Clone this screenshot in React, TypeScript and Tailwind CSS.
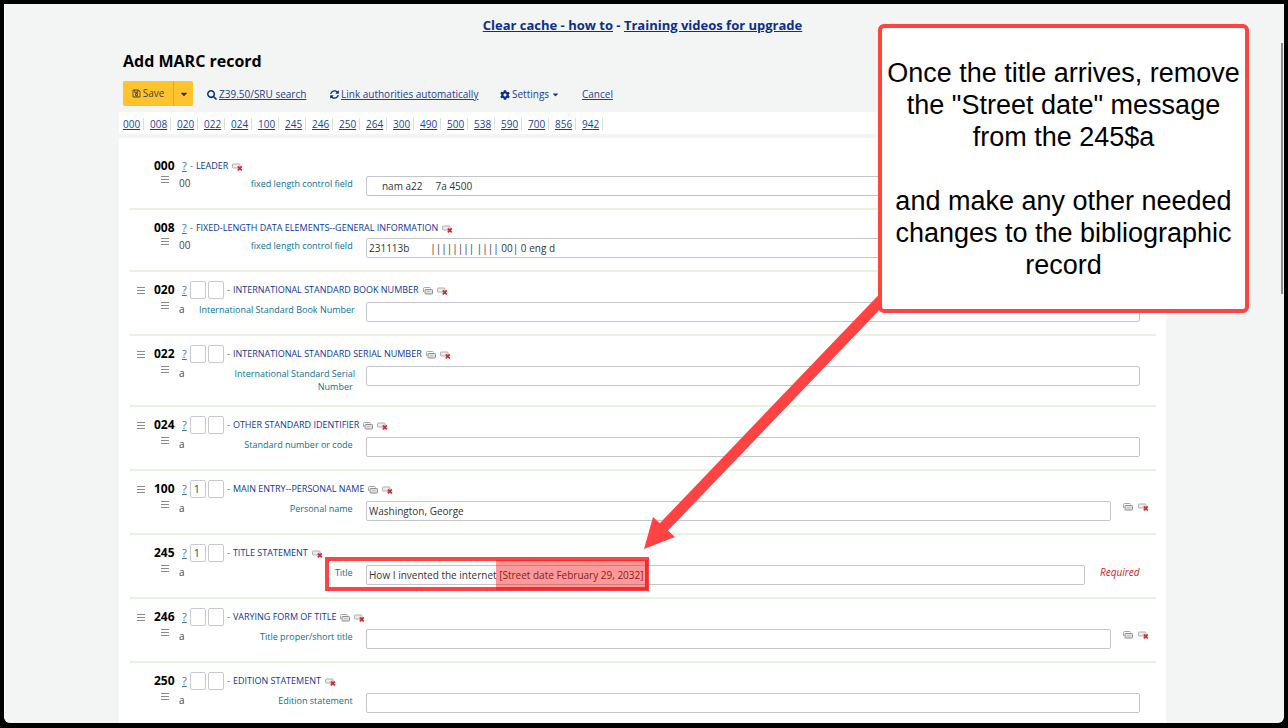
import React from "react";
import { FaSearch, FaSyncAlt, FaCog, FaCaretDown, FaRegSave } from "react-icons/fa";

type Row = {
  tag: string;
  name: string;
  code: string;
  label: string;
  value?: string;
  indicators?: [string, string];
  movable?: boolean;
  repeatable?: boolean;
  extra?: "icons" | "required";
};

const NAV = ["000", "008", "020", "022", "024", "100", "245", "246", "250", "264", "300", "490", "500", "538", "590", "700", "856", "942"];

const ROWS: Row[] = [
  { tag: "000", name: "LEADER", code: "00", label: "fixed length control field", value: "     nam a22     7a 4500" },
  { tag: "008", name: "FIXED-LENGTH DATA ELEMENTS--GENERAL INFORMATION", code: "00", label: "fixed length control field", value: "231113b        |||||||| |||| 00| 0 eng d" },
  { tag: "020", name: "INTERNATIONAL STANDARD BOOK NUMBER", code: "a", label: "International Standard Book Number", indicators: ["", ""], movable: true, repeatable: true },
  { tag: "022", name: "INTERNATIONAL STANDARD SERIAL NUMBER", code: "a", label: "International Standard Serial\nNumber", indicators: ["", ""], movable: true, repeatable: true },
  { tag: "024", name: "OTHER STANDARD IDENTIFIER", code: "a", label: "Standard number or code", indicators: ["", ""], movable: true, repeatable: true },
  { tag: "100", name: "MAIN ENTRY--PERSONAL NAME", code: "a", label: "Personal name", value: "Washington, George", indicators: ["1", ""], movable: true, repeatable: true, extra: "icons" },
  { tag: "245", name: "TITLE STATEMENT", code: "a", label: "Title", value: "How I invented the internet [Street date February 29, 2032]", indicators: ["1", ""], extra: "required" },
  { tag: "246", name: "VARYING FORM OF TITLE", code: "a", label: "Title proper/short title", indicators: ["", ""], movable: true, repeatable: true, extra: "icons" },
  { tag: "250", name: "EDITION STATEMENT", code: "a", label: "Edition statement", indicators: ["", ""] },
];

function Grip() {
  return (
    <svg width="8" height="7" viewBox="0 0 8 7" aria-hidden="true">
      <path d="M0 .5h8M0 3.5h8M0 6.5h8" stroke="#8a8a8a" />
    </svg>
  );
}

function RepeatIcon() {
  return (
    <svg width="10" height="8" viewBox="0 0 10 8" aria-hidden="true">
      <path d="M.5 5V1.5Q.5.5 1.5.5h5Q7.5.5 7.5 1.5" fill="none" stroke="#a5a5a5" />
      <rect x="2" y="2.5" width="7.5" height="4.5" rx=".8" fill="#e4e4e4" stroke="#8c8c8c" />
      <path d="M4 4.7h3.5" stroke="#bbb" />
    </svg>
  );
}

function DeleteIcon() {
  return (
    <svg width="11" height="8" viewBox="0 0 11 8" aria-hidden="true">
      <rect x=".5" y="1" width="7.5" height="4" rx=".6" fill="#ececec" stroke="#b0b0b0" />
      <path d="M5.8 3.3l4 4M9.8 3.3l-4 4" stroke="#cf2a33" strokeWidth="1.7" />
    </svg>
  );
}

function MarcRow({ row, first }: { row: Row; first: boolean }) {
  const id = `field-${row.tag}`;
  return (
    <li className={first ? "pb-3" : "border-t-2 border-[#e7f3df] pt-[9px] pb-3"}>
      <div className="flex h-[18px] items-center">
        <span className="flex w-6 shrink-0 pl-[7px]">{row.movable && <Grip />}</span>
        <span className="w-7 shrink-0 text-[12px] font-bold text-black">{row.tag}</span>
        <a href="#help" className="w-2 shrink-0 text-[11px] text-[#3f6db5] underline">?</a>
        {row.indicators && (
          <span className="mr-[3px] flex gap-0.5">
            {row.indicators.map((v, i) => (
              <input
                key={i}
                aria-label={`${row.tag} indicator ${i + 1}`}
                defaultValue={v}
                className="h-[18px] w-4 rounded-xs border border-[#c9c9d2] bg-white pl-[3px] text-[10px] text-[#333]"
              />
            ))}
          </span>
        )}
        <a href="#field" className="flex items-center gap-[3px] text-[9px] whitespace-nowrap text-[#0f3896]">
          <span className="text-[#555]">-</span>
          {row.name}
        </a>
        <span className="flex items-center gap-1 pt-0.5 pl-1">
          {row.repeatable && <button type="button" aria-label="Repeat this tag"><RepeatIcon /></button>}
          <button type="button" aria-label="Delete this tag"><DeleteIcon /></button>
        </span>
      </div>
      <div className={row.indicators ? "mt-[3px] flex items-start" : "mt-px flex items-start"}>
        <span className="flex w-[49px] shrink-0 pl-[31px]"><Grip /></span>
        <span className="w-5 shrink-0 text-[10px] leading-[14px] text-[#444]">{row.code}</span>
        <label htmlFor={id} className="w-[156px] shrink-0 pt-px text-right text-[9px] leading-[13px] whitespace-pre text-[#0c7090]">
          {row.label + "\u00a0"}
        </label>
        <input
          id={id}
          defaultValue={row.value}
          className="ml-[11px] h-5 min-w-0 flex-1 rounded-xs border border-[#c4c4cc] bg-white px-0.5 text-[10px] text-[#333]"
        />
        {row.extra === "icons" && (
          <span className="flex w-[45px] items-start gap-[5px] pt-0.5 pl-3">
            <button type="button" aria-label="Repeat this subfield"><RepeatIcon /></button>
            <button type="button" aria-label="Delete this subfield"><DeleteIcon /></button>
          </span>
        )}
        {row.extra === "required" && (
          <span className="w-[71px] pl-[15px] text-[10px] leading-[14px] text-[#cc1a22] italic">Required</span>
        )}
        {!row.extra && <span className="w-4" />}
      </div>
    </li>
  );
}

export default function App() {
  return (
    <div className="relative h-screen overflow-hidden bg-black px-1 pt-1 pb-[5px] font-['Open_Sans','Noto_Sans',sans-serif]">
      <div className="h-full overflow-hidden rounded-b-md border-l border-white bg-[#f3f4f4] pr-[118px] pl-[114px]">
        <p className="pt-[11px] text-center text-[13px] leading-5 font-bold text-[#0b2f8a]">
          <a href="#cache" className="underline">Clear cache - how to</a> - <a href="#videos" className="underline">Training videos for upgrade</a>
        </p>
        <h1 className="mt-4 pl-1 text-[16px] leading-5 font-bold text-black">Add MARC record</h1>
        <div className="mt-2.5 flex h-[25px] items-center pl-1 text-[10px] text-[#1b3f97]">
          <div className="flex h-full overflow-hidden rounded-xs bg-[#ffc32b] text-[#444]">
            <button type="button" className="flex w-[51px] items-center justify-center gap-0.5 border-r border-[#dfa820]">
              <FaRegSave size={9} />
              Save
            </button>
            <button type="button" aria-label="More save options" className="flex w-[19px] items-center justify-center text-[#333]">
              <FaCaretDown size={10} />
            </button>
          </div>
          <a href="#search" className="ml-[14px] flex w-[123px] items-center gap-0.5 pt-0.5 underline"><FaSearch size={10} color="#0b2f8a" />Z39.50/SRU search</a>
          <a href="#link" className="flex w-[170px] items-center gap-0.5 pt-0.5 underline"><FaSyncAlt size={9} color="#0b2f8a" />Link authorities automatically</a>
          <button type="button" className="flex w-[82px] items-center gap-0.5 pt-0.5"><FaCog size={10} color="#0b2f8a" />Settings<FaCaretDown size={9} /></button>
          <a href="#cancel" className="pt-0.5 underline">Cancel</a>
        </div>
        <nav className="mt-1.5 bg-white">
          <ul className="flex h-[22px] items-center pt-px pl-1 text-[10px] leading-3 text-[#1b3f97]">
            {NAV.map((t) => (
              <li key={t} className="mr-[6px] w-[21px] border-r border-[#ddd]"><a href={`#field-${t}`} className="underline">{t}</a></li>
            ))}
          </ul>
        </nav>
        <main className="mt-1 bg-white pt-[19px] pr-2.5 pl-[11px]">
          <ul>
            {ROWS.map((r, i) => <MarcRow key={r.tag} row={r} first={i === 0} />)}
          </ul>
        </main>
      </div>

      <div className="absolute top-[43px] right-[5px] h-[251px] w-0.5 bg-[#8a8c8e]" />
      <div className="absolute top-[557px] left-[325px] h-[34px] w-[324px] border-4 border-[#ff4242]" />
      <div className="absolute top-[560px] left-[496px] h-[30px] w-[152px] bg-[#ff0000]/40" />
      <svg className="absolute top-[280px] left-[630px]" width="270" height="280" viewBox="630 280 270 280" aria-hidden="true">
        <path d="M890 291L660 531" stroke="#ff4242" strokeWidth="11" />
        <path d="M644 549L653 517L675 537Z" fill="#ff4242" />
      </svg>
      <aside className="absolute top-6 left-[878px] flex h-[289px] w-[371px] items-center justify-center rounded-md border-4 border-[#ff4242] bg-white text-center font-['Liberation_Sans',sans-serif] text-[27px] leading-8 text-black">
        <p className="whitespace-pre">{"Once the title arrives, remove\nthe \"Street date\" message\nfrom the 245$a\n\nand make any other needed\nchanges to the bibliographic\nrecord"}</p>
      </aside>
    </div>
  );
}
